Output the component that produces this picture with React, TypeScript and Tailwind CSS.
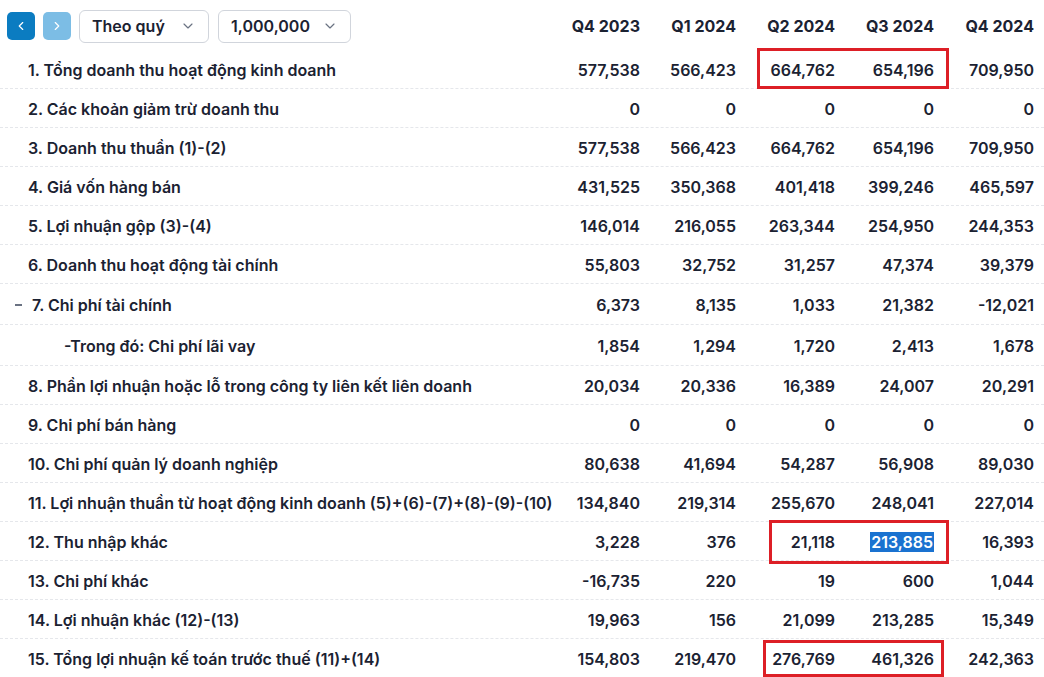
import { ChevronDown, ChevronLeft, ChevronRight } from "lucide-react";

type Row = {
  label: string;
  values: string[];
  tall?: boolean;
  indent?: boolean;
  collapse?: boolean;
  selected?: number;
};

const quarters = ["Q4 2023", "Q1 2024", "Q2 2024", "Q3 2024", "Q4 2024"];
const colWidths = ["w-[96px]", "w-[96px]", "w-[99px]", "w-[99px]", "w-[100px]"];

const rows: Row[] = [
  { label: "1. Tổng doanh thu hoạt động kinh doanh", values: ["577,538", "566,423", "664,762", "654,196", "709,950"] },
  { label: "2. Các khoản giảm trừ doanh thu", values: ["0", "0", "0", "0", "0"] },
  { label: "3. Doanh thu thuần (1)-(2)", values: ["577,538", "566,423", "664,762", "654,196", "709,950"] },
  { label: "4. Giá vốn hàng bán", values: ["431,525", "350,368", "401,418", "399,246", "465,597"] },
  { label: "5. Lợi nhuận gộp (3)-(4)", values: ["146,014", "216,055", "263,344", "254,950", "244,353"] },
  { label: "6. Doanh thu hoạt động tài chính", values: ["55,803", "32,752", "31,257", "47,374", "39,379"] },
  { label: "7. Chi phí tài chính", values: ["6,373", "8,135", "1,033", "21,382", "-12,021"], tall: true, collapse: true },
  { label: "-Trong đó: Chi phí lãi vay", values: ["1,854", "1,294", "1,720", "2,413", "1,678"], tall: true, indent: true },
  { label: "8. Phần lợi nhuận hoặc lỗ trong công ty liên kết liên doanh", values: ["20,034", "20,336", "16,389", "24,007", "20,291"] },
  { label: "9. Chi phí bán hàng", values: ["0", "0", "0", "0", "0"] },
  { label: "10. Chi phí quản lý doanh nghiệp", values: ["80,638", "41,694", "54,287", "56,908", "89,030"] },
  { label: "11. Lợi nhuận thuần từ hoạt động kinh doanh (5)+(6)-(7)+(8)-(9)-(10)", values: ["134,840", "219,314", "255,670", "248,041", "227,014"] },
  { label: "12. Thu nhập khác", values: ["3,228", "376", "21,118", "213,885", "16,393"], selected: 3 },
  { label: "13. Chi phí khác", values: ["-16,735", "220", "19", "600", "1,044"] },
  { label: "14. Lợi nhuận khác (12)-(13)", values: ["19,963", "156", "21,099", "213,285", "15,349"] },
  { label: "15. Tổng lợi nhuận kế toán trước thuế (11)+(14)", values: ["154,803", "219,470", "276,769", "461,326", "242,363"] },
];

export default function App() {
  return (
    <div
      className="relative w-[1044px] h-[677px] overflow-hidden bg-white text-[16px] font-semibold text-[#1b2232]"
      style={{ fontFamily: "Inter, 'Noto Sans', sans-serif" }}
    >
      {/* header */}
      <div className="flex h-[50px] items-center pt-[2px]">
        <div className="flex flex-1 items-center gap-2 pl-[7px]">
          <button className="flex h-7 w-7 items-center justify-center rounded-[5px] bg-[#0b7cc1] text-white">
            <ChevronLeft className="h-3.5 w-3.5" strokeWidth={2} />
          </button>
          <button className="flex h-7 w-7 items-center justify-center rounded-[5px] bg-[#7cbde5] text-white">
            <ChevronRight className="h-3.5 w-3.5" strokeWidth={2} />
          </button>
          <div className="flex h-[33px] w-[130px] items-center justify-between rounded-md border border-gray-300 pl-[12px] pr-[12px]">
            <span>Theo quý</span>
            <ChevronDown className="h-4 w-4 text-gray-500" strokeWidth={1.75} />
          </div>
          <div className="ml-px flex h-[33px] w-[133px] items-center justify-between rounded-md border border-gray-300 pl-[12px] pr-[12px]">
            <span>1,000,000</span>
            <ChevronDown className="h-4 w-4 text-gray-500" strokeWidth={1.75} />
          </div>
        </div>
        {quarters.map((q, i) => (
          <div key={q} className={`${colWidths[i]} pr-[10px] text-right font-bold`}>
            {q}
          </div>
        ))}
      </div>

      {/* rows */}
      {rows.map((r) => (
        <div
          key={r.label}
          className={`flex items-center border-b border-dashed border-gray-200 pt-[2px] ${r.tall ? "h-[41px]" : "h-[39px]"}`}
        >
          <div className={`flex flex-1 items-center whitespace-nowrap ${r.indent ? "pl-[64px]" : "pl-[28px]"}`}>
            {r.collapse && (
              <span className="-ml-[13px] mr-[10px] h-[2px] w-[7px] bg-gray-500" />
            )}
            {r.label}
          </div>
          {r.values.map((v, i) => (
            <div key={i} className={`${colWidths[i]} pr-[10px] text-right`}>
              {r.selected === i ? (
                <span className="bg-[#1a72d0] px-px text-white">{v}</span>
              ) : (
                v
              )}
            </div>
          ))}
        </div>
      ))}

      {/* highlight annotations */}
      <div className="absolute left-[757px] top-[48px] h-[41px] w-[192px] border-[3px] border-[#dd1f26]" />
      <div className="absolute left-[769px] top-[520px] h-[44px] w-[180px] border-[3px] border-[#dd1f26]" />
      <div className="absolute left-[763px] top-[640px] h-[37px] w-[181px] border-[3px] border-[#dd1f26]" />
    </div>
  );
}
